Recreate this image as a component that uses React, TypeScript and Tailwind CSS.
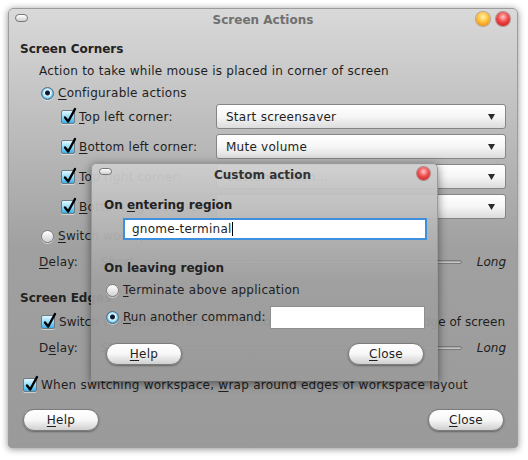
import React from "react";

const font = "font-['DejaVu_Sans','Liberation_Sans',sans-serif]";

// underlined mnemonic letter
const M = ({ c }: { c: string }) => (
  <span className="underline underline-offset-[2px] decoration-[1px]">{c}</span>
);

const Check = () => (
  <span className="relative inline-block shrink-0 w-[14px] h-[14px] rounded-[2px] border border-[#6c7c86] bg-linear-to-b from-[#e2f8ff] via-[#8fdcfa] to-[#34b0e8] shadow-[0_1px_0_rgba(255,255,255,0.5)]">
    <svg
      className="absolute -top-[4px] left-[1px]"
      width="14"
      height="17"
      viewBox="0 0 14 17"
    >
      <path
        d="M2 10.5 L5.2 14.5 L12 2"
        stroke="#000"
        strokeWidth="2.4"
        fill="none"
        strokeLinecap="round"
        strokeLinejoin="round"
      />
    </svg>
  </span>
);

const Radio = ({ on }: { on?: boolean }) =>
  on ? (
    <span className="shrink-0 w-[13px] h-[13px] rounded-full border border-[#4f6e86] bg-[radial-gradient(circle_at_50%_45%,#0e1c33_0,#0e1c33_2px,#f2fbff_3px,#9cdcf7_4.5px,#2f93d6_6.5px)] shadow-[0_1px_0_rgba(255,255,255,0.5)]" />
  ) : (
    <span className="shrink-0 w-[13px] h-[13px] rounded-full border border-[#808080] bg-linear-to-b from-white to-[#d2d2d2] shadow-[0_1px_0_rgba(255,255,255,0.5)]" />
  );

const Combo = ({ text }: { text: string }) => (
  <div className="ml-auto shrink-0 w-[290px] h-[25px] flex items-center rounded-[3px] border border-[#858585] bg-linear-to-b from-white via-[#f6f6f6] to-[#dcdcdc] pl-[9px] pr-[10px]">
    <span className="flex-1 text-[#1e1e1e] whitespace-nowrap">{text}</span>
    <svg width="7" height="6" viewBox="0 0 7 6">
      <polygon points="0,0 7,0 3.5,6" fill="#2a2a2a" />
    </svg>
  </div>
);

const Button = ({ children }: { children: React.ReactNode }) => (
  <div className="w-[76px] h-[22px] flex items-center justify-center rounded-full border border-[#7c7c7c] bg-linear-to-b from-white via-[#f7f7f7] to-[#d0d0d0] shadow-[0_1px_2px_rgba(0,0,0,0.35)] text-[#1e1e1e]">
    {children}
  </div>
);

const Slider = () => (
  <div className="flex-1 flex items-center gap-[10px] pl-[22px]">
    <span className="italic text-[#1e1e1e]">Short</span>
    <div className="flex-1 h-[4px] rounded-full border border-[#7a7a7a] bg-linear-to-b from-[#9a9a9a] to-[#d4d4d4]" />
    <span className="italic text-[#1e1e1e] ml-[5px] tracking-normal">Long</span>
  </div>
);

const Dialog = () => (
  <div className="absolute left-[82px] top-[154px] w-[347px] h-[218px] rounded-t-[5px] bg-linear-to-b from-[rgba(206,206,206,0.94)] via-[rgba(160,160,160,0.94)] via-55% to-[rgba(154,154,154,0.94)] shadow-[0_2px_10px_rgba(0,0,0,0.5)] border border-[#9a9a9a]">
    <div className="relative h-[21px] flex items-center justify-center">
      <span className="absolute left-[7px] top-[4px] w-[13px] h-[7px] rounded-full border border-[#777] bg-linear-to-b from-white to-[#cfcfcf]" />
      <span className="font-bold text-[#333] pr-[4px] tracking-normal">Custom action</span>
      <span className="absolute left-[325px] top-[3px] w-[13px] h-[13px] rounded-full bg-[radial-gradient(circle_at_50%_35%,#ffc8c8_0,#f05050_45%,#c40c0c_100%)] shadow-[0_0_0_1px_rgba(120,0,0,0.35)]" />
    </div>
    <div className="px-[12px]">
      <div className="mt-[9px] h-[22px] flex items-center font-bold text-[#222] tracking-normal">
        On&nbsp;<M c="e" />ntering region
      </div>
      <div className="mt-[2px] ml-[19px] w-[304px] h-[22px] flex items-center bg-white border-2 border-[#3e8fdc] pl-[7px] text-[#1e1e1e]">
        gnome-terminal
        <span className="w-[1px] h-[14px] bg-black" />
      </div>
      <div className="mt-[17px] h-[22px] flex items-center font-bold text-[#222] tracking-normal">
        On leaving region
      </div>
      <div className="h-[22px] flex items-center gap-[4px] pl-[2px] text-[#1e1e1e]">
        <Radio />
        <span className="whitespace-nowrap">
          <M c="T" />
          erminate above application
        </span>
      </div>
      <div className="mt-[4px] h-[24px] flex items-center gap-[4px] pl-[2px] text-[#1e1e1e]">
        <Radio on />
        <span className="whitespace-nowrap tracking-[0.05px]">
          <M c="R" />
          un another command:
        </span>
        <div className="ml-auto shrink-0 w-[155px] h-[23px] bg-white border border-[#8e8e8e]" />
      </div>
      <div className="mt-[14px] flex justify-between pl-[2px] pr-[1px]">
        <Button>
          <M c="H" />
          elp
        </Button>
        <Button>
          <M c="C" />
          lose
        </Button>
      </div>
    </div>
  </div>
);

export default function App() {
  return (
    <div className={`w-[528px] h-[460px] bg-white pt-[8px] pl-[8px] text-[12px] leading-[14px] tracking-[0.25px] ${font}`}>
      <div className="relative w-[510px] h-[440px] rounded-t-[5px] rounded-b-[3px] bg-linear-to-b from-[#d9d9d9] via-[#a0a0a0] via-55% to-[#9a9a9a] shadow-[0_1px_7px_rgba(0,0,0,0.45)] border border-[#9c9c9c]">
        {/* title bar */}
        <div className="relative h-[21px] flex items-center justify-center">
          <span className="absolute left-[6px] top-[5px] w-[13px] h-[8px] rounded-full border border-[#777] bg-linear-to-b from-white to-[#cfcfcf]" />
          <span className="font-bold text-[#707070] tracking-normal">Screen Actions</span>
          <span className="absolute left-[467px] top-[3px] w-[14px] h-[14px] rounded-full bg-[radial-gradient(circle_at_50%_35%,#fff3b0_0,#ffc23a_45%,#e07800_100%)] shadow-[0_0_0_1px_rgba(140,70,0,0.35)]" />
          <span className="absolute left-[487px] top-[3px] w-[14px] h-[14px] rounded-full bg-[radial-gradient(circle_at_50%_35%,#ffc8c8_0,#f04848_45%,#c40c0c_100%)] shadow-[0_0_0_1px_rgba(120,0,0,0.35)]" />
        </div>

        <div className="px-[11px] pt-[8px] text-[#1e1e1e]">
          <div className="h-[22px] flex items-center font-bold text-[#222] tracking-normal">Screen Corners</div>
          <div className="h-[22px] flex items-center pl-[19px] whitespace-nowrap">
            Action to take while mouse is placed in corner of screen
          </div>
          <div className="h-[22px] flex items-center gap-[4px] pl-[21px]">
            <Radio on />
            <span>
              <M c="C" />
              onfigurable actions
            </span>
          </div>

          <div className="flex flex-col gap-[5px]">
            {[
              ["T", "op left corner:", "Start screensaver"],
              ["B", "ottom left corner:", "Mute volume"],
              ["T", "op right corner:", "Custom action..."],
              ["B", "ottom right corner:", ""],
            ].map(([k, rest, val], i) => (
              <div key={i} className="h-[25px] flex items-center gap-[4px] pl-[41px]">
                <Check />
                <span className="whitespace-nowrap">
                  <M c={k} />
                  {rest}
                </span>
                <Combo text={val} />
              </div>
            ))}
          </div>

          <div className="mt-[5px] h-[24px] flex items-center gap-[4px] pl-[21px]">
            <Radio />
            <span className="whitespace-nowrap">
              <M c="S" />
              witch workspace when mouse moves into corner
            </span>
          </div>
          <div className="h-[28px] flex items-center pl-[19px]">
            <span>
              <M c="D" />
              elay:
            </span>
            <Slider />
          </div>

          <div className="mt-[10px] h-[24px] flex items-center font-bold text-[#222] tracking-normal">Screen Edges</div>
          <div className="h-[24px] flex items-center gap-[4px] pl-[21px]">
            <Check />
            <span className="whitespace-nowrap tracking-[0.03px]">
              Switch workspace when mouse moves outside left or right edge of screen
            </span>
          </div>
          <div className="h-[28px] flex items-center pl-[19px]">
            <span>
              D<M c="e" />
              lay:
            </span>
            <Slider />
          </div>

          <div className="mt-[10px] h-[26px] flex items-center gap-[4px] pl-[3px]">
            <Check />
            <span className="whitespace-nowrap">
              When switching workspace, <M c="w" />
              rap around edges of workspace layout
            </span>
          </div>

          <div className="mt-[11px] flex justify-between pl-[3px] pr-[2px]">
            <Button>
              <M c="H" />
              elp
            </Button>
            <Button>
              <M c="C" />
              lose
            </Button>
          </div>
        </div>

        <Dialog />
      </div>
    </div>
  );
}
